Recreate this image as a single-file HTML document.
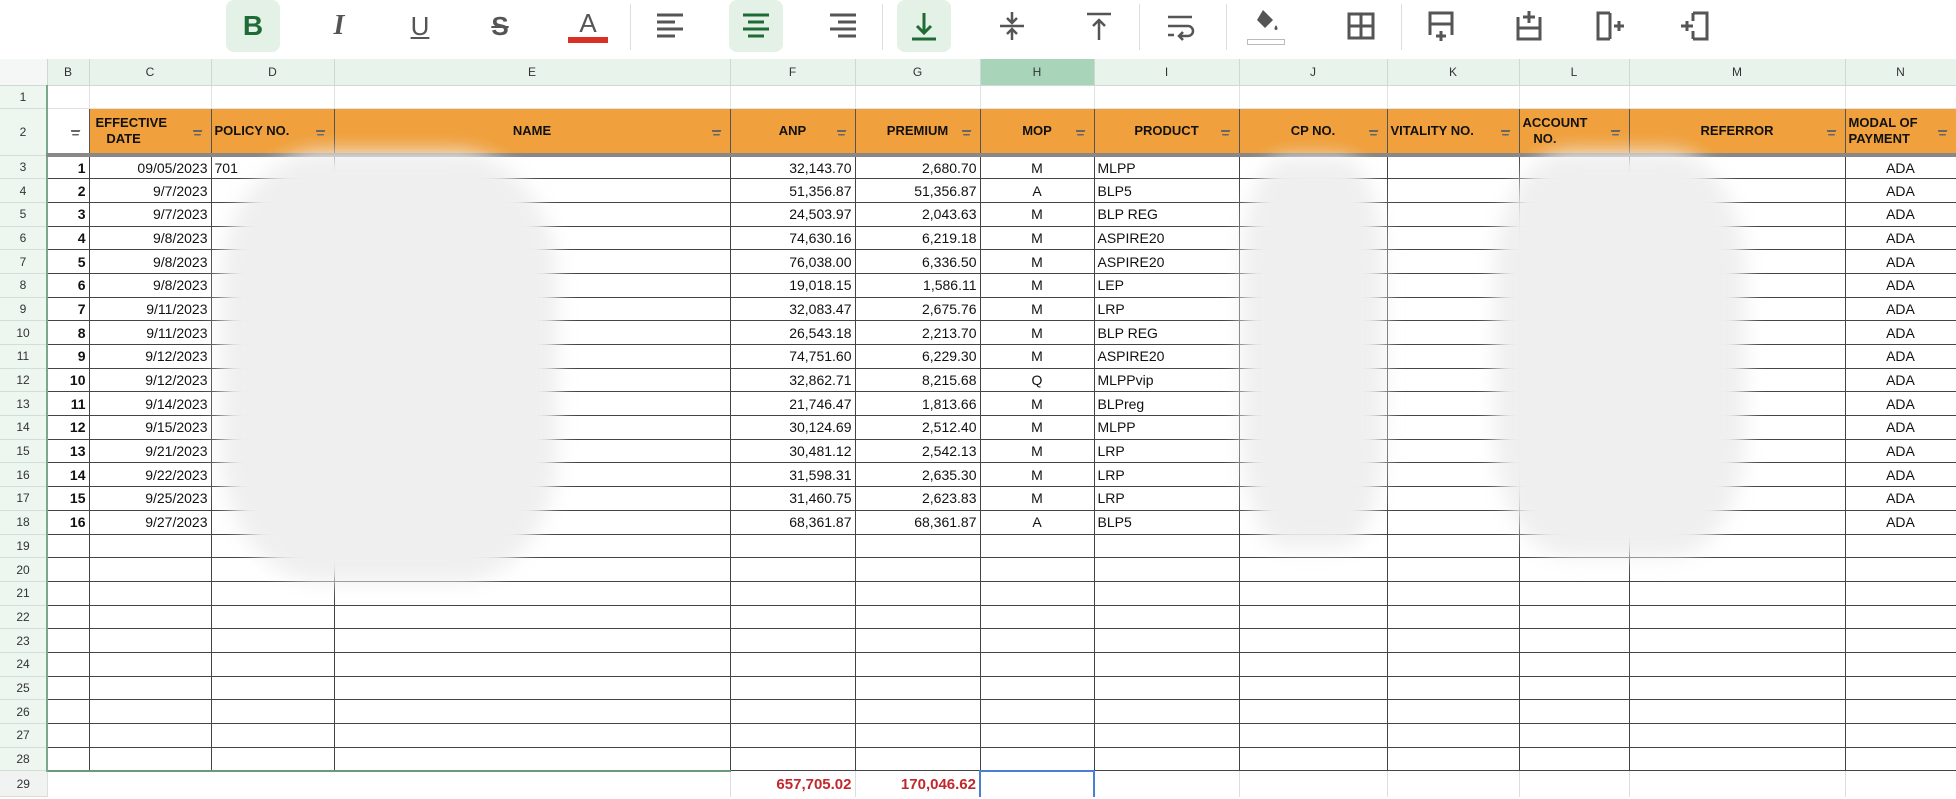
<!DOCTYPE html>
<html><head><meta charset="utf-8"><style>
*{margin:0;padding:0;box-sizing:border-box}
body{width:1956px;height:799px;overflow:hidden;background:#fff;font-family:"Liberation Sans Narrow","Liberation Sans",sans-serif;position:relative}
#tb{position:absolute;left:0;top:0;width:1956px;height:59px;background:#fff}
.ic{position:absolute;top:0;width:54px;height:52px;border-radius:8px;display:flex;align-items:center;justify-content:center}
.hl{background:#e3f1e6}
.sep{position:absolute;top:4px;width:1px;height:46px;background:#ddd}
table{position:absolute;left:0;top:59px;border-collapse:collapse;table-layout:fixed;width:1956px}
td{overflow:hidden;white-space:nowrap;font-size:14px;color:#111;padding:0 3px}
tr.ch td{height:26px;background:#e8f3ec;border-right:1px solid #cfd8d2;border-bottom:1px solid #cfd8d2;text-align:center;font-size:12px;color:#333}
tr.ch td.sel{background:#a8d5ba}
td.rh{background:#eef6f0;text-align:center;font-size:12px;color:#333;border-right:2px solid #7aa88a!important;border-bottom:1px solid #d5ddd8!important;padding:0}
tr.r1 td{height:23px;border-right:1px solid #e2e2e2;border-bottom:1px solid #e2e2e2}
tr.h td{height:47px;background:#f0a03c;border:1px solid #555;border-bottom:4px solid #888;font-weight:bold;font-size:13px;text-align:center;position:relative;line-height:16px;color:#111}
tr.h td.w{background:#fff}
tr.h td:not(.rh):after{content:"";position:absolute;right:8px;top:21px;width:10px;height:6px;background:linear-gradient(#666 0 2px,transparent 2px 4px,#666 4px 6px);clip-path:polygon(0 0,100% 0,80% 100%,20% 100%)}
tr.h td.rh{background:#eef6f0;font-weight:normal;font-size:12px;color:#333;border:none;border-right:2px solid #7aa88a}
tr.d td{height:23.7px;border:1px solid #444}
tr.d td.rh{border:none}
.b{font-weight:bold;text-align:right}.r{text-align:right}.c{text-align:center}
tr.t td{height:26px;border-right:1px solid #ddd;font-weight:bold;color:#c0282d;font-size:15px}
.blob{position:absolute;background:#efefef;filter:blur(10px);border-radius:30%}
</style></head><body>
<div id="tb">
<div class="ic hl" style="left:226px"><span style="font:bold 28px 'Liberation Sans';color:#1e6b35">B</span></div>
<div class="ic" style="left:312px"><span style="font:italic bold 28px 'Liberation Serif';color:#555">I</span></div>
<div class="ic" style="left:393px"><span style="font:26px 'Liberation Sans';color:#555;text-decoration:underline">U</span></div>
<div class="ic" style="left:473px"><span style="font:bold 26px 'Liberation Sans';color:#555;text-decoration:line-through">S</span></div>
<div class="ic" style="left:561px;flex-direction:column"><span style="font:26px 'Liberation Sans';color:#555;line-height:28px">A</span><div style="width:40px;height:6px;background:#d93025"></div></div>
<div class="sep" style="left:630px"></div>
<div class="ic" style="left:643px"><svg width="30" height="30"><path d="M2 4h26M2 11h18M2 18h26M2 25h18" stroke="#555" stroke-width="3"/></svg></div>
<div class="ic hl" style="left:729px"><svg width="30" height="30"><path d="M2 4h26M7 11h16M2 18h26M7 25h16" stroke="#1e6b35" stroke-width="3"/></svg></div>
<div class="ic" style="left:816px"><svg width="30" height="30"><path d="M2 4h26M10 11h18M2 18h26M10 25h18" stroke="#555" stroke-width="3"/></svg></div>
<div class="sep" style="left:882px"></div>
<div class="ic hl" style="left:897px"><svg width="30" height="32"><path d="M15 3v20M8 16l7 7 7-7M3 29h24" stroke="#1e6b35" stroke-width="3" fill="none"/></svg></div>
<div class="ic" style="left:985px"><svg width="30" height="32"><path d="M15 2v10M10 8l5 5 5-5M3 16h24M15 30V20M10 24l5-5 5 5" stroke="#555" stroke-width="2.5" fill="none"/></svg></div>
<div class="ic" style="left:1072px"><svg width="30" height="32"><path d="M3 4h24M15 30V10M9 16l6-6 6 6" stroke="#555" stroke-width="2.5" fill="none"/></svg></div>
<div class="sep" style="left:1139px"></div>
<div class="ic" style="left:1154px"><svg width="32" height="30"><path d="M3 6h24M3 15h20a5 5 0 010 10h-8M18 21l-4 4 4 4M3 24h6" stroke="#555" stroke-width="2.5" fill="none"/></svg></div>
<div class="sep" style="left:1226px"></div>
<div class="ic" style="left:1239px;flex-direction:column"><svg width="32" height="30"><path d="M13 3l10 10-8 8-8-8zM26 18c2 3 2 5 0 5s-2-2 0-5z" fill="#555"/></svg><div style="width:38px;height:6px;border:1px solid #bbb;margin-top:2px"></div></div>
<div class="ic" style="left:1334px"><svg width="30" height="30"><path d="M3 3h24v24H3zM15 3v24M3 15h24" stroke="#555" stroke-width="3" fill="none"/></svg></div>
<div class="sep" style="left:1401px"></div>
<div class="ic" style="left:1414px"><svg width="30" height="34"><path d="M4 26V4h22v22M4 15h22M15 22v10M10 27h10" stroke="#555" stroke-width="3" fill="none"/></svg></div>
<div class="ic" style="left:1502px"><svg width="30" height="34"><path d="M4 8v22h22V8M4 19h22M15 2v12M9 8h12" stroke="#555" stroke-width="3" fill="none"/></svg></div>
<div class="ic" style="left:1583px"><svg width="32" height="32"><path d="M16 3H4v26h12M16 3v26M20 16h10M25 11v10" stroke="#555" stroke-width="3" fill="none"/></svg></div>
<div class="ic" style="left:1668px"><svg width="32" height="32"><path d="M14 3h14v26H14M14 3v8M14 21v8M2 16h12M8 11v10" stroke="#555" stroke-width="3" fill="none"/></svg></div>
</div>
<table>
<colgroup><col style="width:47px"><col style="width:42px"><col style="width:122px"><col style="width:123px"><col style="width:396px"><col style="width:125px"><col style="width:125px"><col style="width:114px"><col style="width:145px"><col style="width:148px"><col style="width:132px"><col style="width:110px"><col style="width:216px"><col style="width:111px"></colgroup>
<tr class="ch"><td style="background:#f4f7f5"></td><td>B</td><td>C</td><td>D</td><td>E</td><td>F</td><td>G</td><td class="sel">H</td><td>I</td><td>J</td><td>K</td><td>L</td><td>M</td><td>N</td></tr>
<tr class="r1"><td class="rh">1</td><td></td><td></td><td></td><td></td><td></td><td></td><td></td><td></td><td></td><td></td><td></td><td></td><td></td></tr>
<tr class="h"><td class="rh">2</td><td class="w"></td><td style="text-align:left;padding-left:6px">EFFECTIVE<br>&nbsp;&nbsp;&nbsp;DATE</td><td style="text-align:left">POLICY NO.</td><td>NAME</td><td>ANP</td><td>PREMIUM</td><td>MOP</td><td>PRODUCT</td><td>CP NO.</td><td style="text-align:left">VITALITY NO.</td><td style="text-align:left">ACCOUNT<br>&nbsp;&nbsp;&nbsp;NO.</td><td>REFERROR</td><td style="text-align:left">MODAL OF<br>PAYMENT</td></tr>
<tr class="d"><td class="rh">3</td><td class="b">1</td><td class="r">09/05/2023</td><td>701</td><td></td><td class="r">32,143.70</td><td class="r">2,680.70</td><td class="c">M</td><td>MLPP</td><td></td><td></td><td></td><td></td><td class="c">ADA</td></tr>
<tr class="d"><td class="rh">4</td><td class="b">2</td><td class="r">9/7/2023</td><td></td><td></td><td class="r">51,356.87</td><td class="r">51,356.87</td><td class="c">A</td><td>BLP5</td><td></td><td></td><td></td><td></td><td class="c">ADA</td></tr>
<tr class="d"><td class="rh">5</td><td class="b">3</td><td class="r">9/7/2023</td><td></td><td></td><td class="r">24,503.97</td><td class="r">2,043.63</td><td class="c">M</td><td>BLP REG</td><td></td><td></td><td></td><td></td><td class="c">ADA</td></tr>
<tr class="d"><td class="rh">6</td><td class="b">4</td><td class="r">9/8/2023</td><td></td><td></td><td class="r">74,630.16</td><td class="r">6,219.18</td><td class="c">M</td><td>ASPIRE20</td><td></td><td></td><td></td><td></td><td class="c">ADA</td></tr>
<tr class="d"><td class="rh">7</td><td class="b">5</td><td class="r">9/8/2023</td><td></td><td></td><td class="r">76,038.00</td><td class="r">6,336.50</td><td class="c">M</td><td>ASPIRE20</td><td></td><td></td><td></td><td></td><td class="c">ADA</td></tr>
<tr class="d"><td class="rh">8</td><td class="b">6</td><td class="r">9/8/2023</td><td></td><td></td><td class="r">19,018.15</td><td class="r">1,586.11</td><td class="c">M</td><td>LEP</td><td></td><td></td><td></td><td></td><td class="c">ADA</td></tr>
<tr class="d"><td class="rh">9</td><td class="b">7</td><td class="r">9/11/2023</td><td></td><td></td><td class="r">32,083.47</td><td class="r">2,675.76</td><td class="c">M</td><td>LRP</td><td></td><td></td><td></td><td></td><td class="c">ADA</td></tr>
<tr class="d"><td class="rh">10</td><td class="b">8</td><td class="r">9/11/2023</td><td></td><td></td><td class="r">26,543.18</td><td class="r">2,213.70</td><td class="c">M</td><td>BLP REG</td><td></td><td></td><td></td><td></td><td class="c">ADA</td></tr>
<tr class="d"><td class="rh">11</td><td class="b">9</td><td class="r">9/12/2023</td><td></td><td></td><td class="r">74,751.60</td><td class="r">6,229.30</td><td class="c">M</td><td>ASPIRE20</td><td></td><td></td><td></td><td></td><td class="c">ADA</td></tr>
<tr class="d"><td class="rh">12</td><td class="b">10</td><td class="r">9/12/2023</td><td></td><td></td><td class="r">32,862.71</td><td class="r">8,215.68</td><td class="c">Q</td><td>MLPPvip</td><td></td><td></td><td></td><td></td><td class="c">ADA</td></tr>
<tr class="d"><td class="rh">13</td><td class="b">11</td><td class="r">9/14/2023</td><td></td><td></td><td class="r">21,746.47</td><td class="r">1,813.66</td><td class="c">M</td><td>BLPreg</td><td></td><td></td><td></td><td></td><td class="c">ADA</td></tr>
<tr class="d"><td class="rh">14</td><td class="b">12</td><td class="r">9/15/2023</td><td></td><td></td><td class="r">30,124.69</td><td class="r">2,512.40</td><td class="c">M</td><td>MLPP</td><td></td><td></td><td></td><td></td><td class="c">ADA</td></tr>
<tr class="d"><td class="rh">15</td><td class="b">13</td><td class="r">9/21/2023</td><td></td><td></td><td class="r">30,481.12</td><td class="r">2,542.13</td><td class="c">M</td><td>LRP</td><td></td><td></td><td></td><td></td><td class="c">ADA</td></tr>
<tr class="d"><td class="rh">16</td><td class="b">14</td><td class="r">9/22/2023</td><td></td><td></td><td class="r">31,598.31</td><td class="r">2,635.30</td><td class="c">M</td><td>LRP</td><td></td><td></td><td></td><td></td><td class="c">ADA</td></tr>
<tr class="d"><td class="rh">17</td><td class="b">15</td><td class="r">9/25/2023</td><td></td><td></td><td class="r">31,460.75</td><td class="r">2,623.83</td><td class="c">M</td><td>LRP</td><td></td><td></td><td></td><td></td><td class="c">ADA</td></tr>
<tr class="d"><td class="rh">18</td><td class="b">16</td><td class="r">9/27/2023</td><td></td><td></td><td class="r">68,361.87</td><td class="r">68,361.87</td><td class="c">A</td><td>BLP5</td><td></td><td></td><td></td><td></td><td class="c">ADA</td></tr>
<tr class="d"><td class="rh">19</td><td></td><td></td><td></td><td></td><td></td><td></td><td></td><td></td><td></td><td></td><td></td><td></td><td></td></tr>
<tr class="d"><td class="rh">20</td><td></td><td></td><td></td><td></td><td></td><td></td><td></td><td></td><td></td><td></td><td></td><td></td><td></td></tr>
<tr class="d"><td class="rh">21</td><td></td><td></td><td></td><td></td><td></td><td></td><td></td><td></td><td></td><td></td><td></td><td></td><td></td></tr>
<tr class="d"><td class="rh">22</td><td></td><td></td><td></td><td></td><td></td><td></td><td></td><td></td><td></td><td></td><td></td><td></td><td></td></tr>
<tr class="d"><td class="rh">23</td><td></td><td></td><td></td><td></td><td></td><td></td><td></td><td></td><td></td><td></td><td></td><td></td><td></td></tr>
<tr class="d"><td class="rh">24</td><td></td><td></td><td></td><td></td><td></td><td></td><td></td><td></td><td></td><td></td><td></td><td></td><td></td></tr>
<tr class="d"><td class="rh">25</td><td></td><td></td><td></td><td></td><td></td><td></td><td></td><td></td><td></td><td></td><td></td><td></td><td></td></tr>
<tr class="d"><td class="rh">26</td><td></td><td></td><td></td><td></td><td></td><td></td><td></td><td></td><td></td><td></td><td></td><td></td><td></td></tr>
<tr class="d"><td class="rh">27</td><td></td><td></td><td></td><td></td><td></td><td></td><td></td><td></td><td></td><td></td><td></td><td></td><td></td></tr>
<tr class="d"><td class="rh">28</td><td></td><td></td><td></td><td></td><td></td><td></td><td></td><td></td><td></td><td></td><td></td><td></td><td></td></tr>
<tr class="t"><td class="rh" style="background:#f1f3f2;border-right:1px solid #ddd!important;font-weight:normal;color:#333;font-size:12px">29</td><td colspan="4" style="border-top:2px solid #6b9a7b"></td><td class="r" style="border-top:1px solid #555">657,705.02</td><td class="r" style="border-top:1px solid #555">170,046.62</td><td style="border:2px solid #4a7fd4;border-bottom:none"></td><td></td><td></td><td></td><td></td><td></td><td></td></tr>
</table>
<div class="blob" style="left:222px;top:152px;width:335px;height:430px"></div>
<div class="blob" style="left:1242px;top:158px;width:142px;height:390px"></div>
<div class="blob" style="left:1495px;top:152px;width:250px;height:405px"></div>
</body></html>
